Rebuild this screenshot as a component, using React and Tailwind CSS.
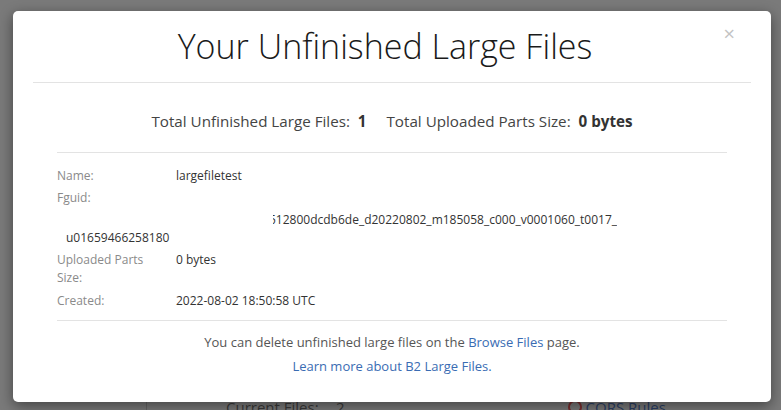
export default function App() {
  return (
    <div
      className="relative w-[781px] h-[410px] overflow-hidden bg-[#7a7a7a]"
      style={{ fontFamily: '"Open Sans", "Noto Sans", sans-serif' }}
    >
      {/* page behind the overlay */}
      <div className="absolute left-[146px] top-[388px] w-[560px] h-[40px] border-l border-[#666] text-[15px] text-[#3a3a3a] whitespace-nowrap">
        <div className="flex items-center pt-[8px]">
          <span className="ml-[79px] w-[110px]">Current Files:</span>
          <span>2</span>
          <span className="ml-[223px] mr-[4px] w-[14px] h-[14px] rounded-full border-2 border-[#7a2f2f]" />
          <span className="text-[#2b3f66]">CORS Rules</span>
        </div>
      </div>

      {/* modal */}
      <div className="absolute left-[13px] top-[11px] w-[758px] h-[391px] rounded-[5px] bg-white shadow-[0_4px_14px_rgba(0,0,0,0.45)]">
        <div className="relative px-[20px]">
          <h1 className="pt-[12px] pb-[13px] text-center text-[34px] leading-[46px] font-light text-[#1a1a1a] pr-[14px]">
            Your Unfinished Large Files
          </h1>
          <button className="absolute right-[36px] top-[13px] text-[20px] leading-none text-[#c3c3c3]">
            ×
          </button>
          <div className="border-t border-[#e3e3e3]" />
        </div>

        <div className="px-[44px]">
          <div className="flex justify-center gap-[20px] pt-[28px] pb-[21px] text-[15.2px] leading-[20px] text-[#444]">
            <span>
              Total Unfinished Large Files:&nbsp; <b className="font-bold text-[#333]">1</b>
            </span>
            <span>
              Total Uploaded Parts Size:&nbsp; <b className="font-bold text-[#333]">0 bytes</b>
            </span>
          </div>
          <div className="border-t border-[#e3e3e3]" />

          <div className="pt-[12px] pb-[8px] text-[12px] leading-[22px]">
            <div className="flex">
              <span className="w-[119px] text-[#8a8a8a]">Name:</span>
              <span className="text-[#333]">largefiletest</span>
            </div>
            <div className="text-[#8a8a8a]">Fguid:</div>
            <div className="flex">
              <span className="w-[216px]" />
              <span className="overflow-hidden text-[#333]">
                <span className="block -ml-[4px] whitespace-nowrap">
                  512800dcdb6de_d20220802_m185058_c000_v0001060_t0017_
                </span>
              </span>
            </div>
            <div className="-mt-[2px] pl-[9px] text-[#333] leading-[18px]">u01659466258180</div>
            <div className="flex mt-[4px] leading-[18px]">
              <span className="w-[119px] text-[#8a8a8a]">
                Uploaded Parts
                <br />
                Size:
              </span>
              <span className="text-[#333]">0 bytes</span>
            </div>
            <div className="flex mt-[3px]">
              <span className="w-[119px] text-[#8a8a8a]">Created:</span>
              <span className="text-[#333]">2022-08-02 18:50:58 UTC</span>
            </div>
          </div>
          <div className="border-t border-[#e3e3e3]" />

          <div className="pt-[9px] text-center text-[13px] leading-[24px] text-[#555]">
            <p>
              You can delete unfinished large files on the{" "}
              <a className="text-[#3a6cb3]">Browse Files</a> page.
            </p>
            <p>
              <a className="text-[#3a6cb3]">Learn more about B2 Large Files.</a>
            </p>
          </div>
        </div>
      </div>
    </div>
  );
}
